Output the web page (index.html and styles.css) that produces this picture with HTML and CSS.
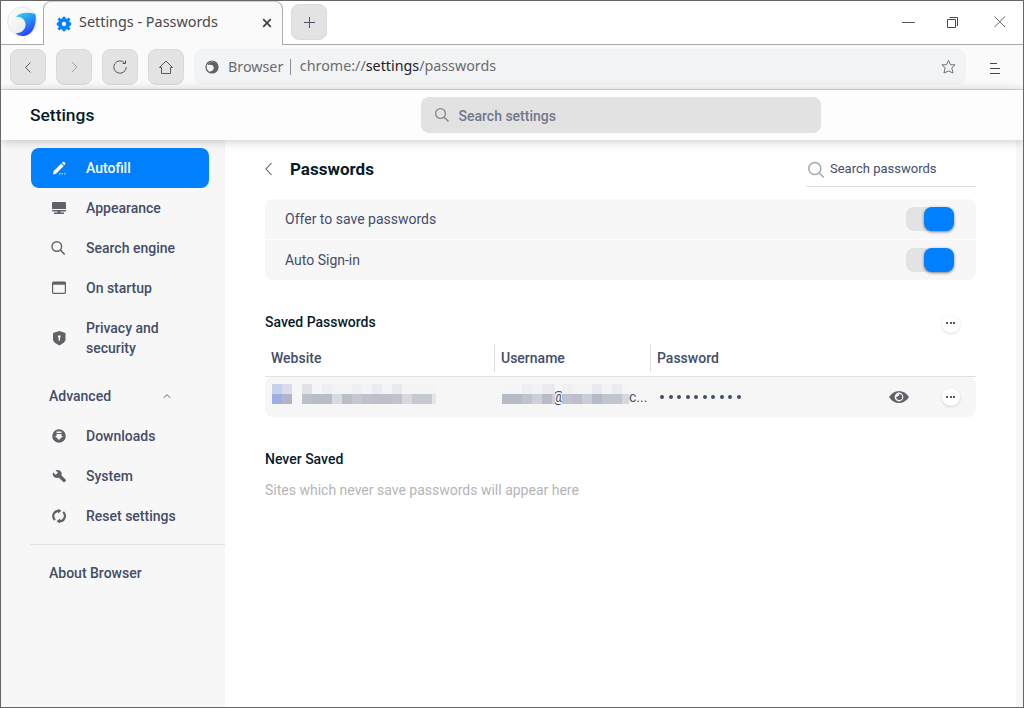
FILE: index.html
```html
<!DOCTYPE html>
<html lang="en">
<head>
<meta charset="utf-8">
<title>Settings - Passwords</title>
<link rel="stylesheet" href="styles.css">
</head>
<body>
<div class="window">
  <div class="tabstrip">
    <div class="logo-cell">
      <svg width="30" height="32" viewBox="0 0 30 32">
        <defs>
          <linearGradient id="lg" x1="0.2" y1="0" x2="0.7" y2="1"><stop offset="0" stop-color="#35d0ea"/><stop offset=".45" stop-color="#2590fb"/><stop offset="1" stop-color="#3030ff"/></linearGradient>
          <linearGradient id="lw" x1="0" y1="0" x2="1" y2="1"><stop offset="0" stop-color="#fff"/><stop offset="1" stop-color="#e6e6e9"/></linearGradient>
        </defs>
        <circle cx="15" cy="15.500" r="14.500" fill="url(#lw)" stroke="#e2e2e2" stroke-width=".8"/>
        <path d="M8.500 11C12 6.500 21 5.500 28.500 8C30 18 26 29 17 30C13.500 30.500 10.500 29 8.500 27.300C14.500 27.500 19 23 18.500 18C18 13.500 14 10 8.500 11Z" fill="url(#lg)"/>
      </svg>
    </div>
    <div class="tab">
      <svg class="gear" width="16" height="16" viewBox="0 0 16 16"><g fill="none" stroke="#0080ff"><circle cx="8" cy="8" r="4.100" stroke-width="3.900"/><path stroke-width="2.800" d="M8 .8V3M8 13V15.200M.8 8H3M13 8H15.200M2.500 2.500L4.500 4.500M11.500 11.500L13.500 13.500M2.500 13.500L4.500 11.500M11.500 4.500L13.500 2.500"/></g></svg>
      <span class="tab-title">Settings - Passwords</span>
      <svg width="10" height="10" viewBox="0 0 10 10"><path d="M1.200 1.200L8.800 8.800M8.800 1.200L1.200 8.800" stroke="#3c4043" stroke-width="1.700"/></svg>
    </div>
    <div class="strip-rest">
      <div class="tool-btn"><svg width="12" height="12" viewBox="0 0 12 12"><path d="M6.500 1V12M1 6.500H12" stroke="#4a5470"/></svg></div>
      <div class="win-controls">
        <svg width="14" height="14" viewBox="0 0 14 14"><path d="M1 7.500H14" stroke="#55585e"/></svg>
        <svg width="14" height="14" viewBox="0 0 14 14"><path d="M.5 4.500H8.500V12.500H.5ZM2.500 2.500H10.500V11" stroke="#44474e" fill="none"/></svg>
        <svg width="14" height="14" viewBox="0 0 14 14"><path d="M1.500 1.500L12 12M12 1.500L1.500 12" stroke="#5f6368"/></svg>
      </div>
    </div>
  </div>

  <div class="toolbar">
    <div class="tool-btn"><svg width="16" height="16" viewBox="0 0 16 16"><path d="M10.500 3.500L5.500 8.500L10.500 13.500" stroke="#55585e" fill="none"/></svg></div>
    <div class="tool-btn"><svg width="16" height="16" viewBox="0 0 16 16"><path d="M6 3L11 8L6 13" stroke="#a2a4a7" fill="none"/></svg></div>
    <div class="tool-btn"><svg width="16" height="16" viewBox="0 0 16 16"><path d="M12.700 4A6.200 6.200 0 1 0 14.200 8M10.500 4.500H13.500V1.500" stroke="#55585e" fill="none"/></svg></div>
    <div class="tool-btn"><svg width="16" height="16" viewBox="0 0 16 16"><path d="M1.500 8.500L8 2L14.500 8.500H12.500V14.500H3.500V8.500Z" stroke="#55585e" fill="none"/></svg></div>
    <div class="omnibox">
      <svg width="14" height="14" viewBox="0 0 14 14"><circle cx="7" cy="7" r="6" fill="none" stroke="#5f6368" stroke-width="1.200"/><path d="M3 4C4 .8 12 .5 13.200 6C13.500 10 10 13.500 6 13L5 11.500C8 11 9 9.500 8.700 7C8.200 4.800 5.500 4.300 3 5Z" fill="#5f6368"/></svg>
      <span class="scheme-name">Browser</span>
      <span class="url">chrome://<b>settings</b>/passwords</span>
      <svg width="16" height="16" viewBox="0 0 16 16"><path d="M8.500 1.500L10.500 5.800H15L11.800 9L13 14L8.500 12L4 14L5.200 9L2 5.800H6.500Z" stroke="#6c7075" fill="none" stroke-linejoin="round"/></svg>
    </div>
    <svg class="menu" width="12" height="14" viewBox="0 0 12 14"><path d="M1 2.500H8M1 7.500H11M1 12.500H11" stroke="#44474e"/></svg>
  </div>

  <div class="header">
    <h1>Settings</h1>
    <div class="search">
      <svg width="16" height="16" viewBox="0 0 16 16"><circle cx="6.500" cy="6.500" r="4.900" stroke="#858689" stroke-width="1.300" fill="none"/><path d="M10 10L14.500 14.500" stroke="#858689" stroke-width="1.400"/></svg>
      <span>Search settings</span>
    </div>
  </div>

  <div class="content">
    <nav class="sidebar">
      <div class="item active"><svg width="16" height="16" viewBox="0 0 16 16"><path fill="#fff" d="M2.500 11.300L10.200 3.600L12.700 6.100L5 13.800L2 14.500ZM11 2.800L11.900 1.900Q12.600 1.500 13.300 2.100L14.200 3Q14.700 3.600 14.200 4.200L13.400 5.200Z"/><path fill="#9fceff" d="M8 13h1.500v1.400h-1.500zM10.500 13h1.500v1.400h-1.500zM13 13h1.500v1.400h-1.500z"/></svg>Autofill</div>
      <div class="item"><svg width="16" height="16" viewBox="0 0 16 16"><path fill="#5f6368" d="M2 2H14Q15 2 15 3V9H1V3Q1 2 2 2ZM1 10H15V10.500Q15 11.500 14 11.500H2Q1 11.500 1 10.500ZM6.500 11H9.500V12.500H13V14H3V12.500H6.500Z"/></svg>Appearance</div>
      <div class="item"><svg width="16" height="16" viewBox="0 0 16 16"><circle cx="5.800" cy="6.500" r="4.800" stroke="#5f6368" stroke-width="1.400" fill="none"/><path d="M9.300 10L13.700 14.500" stroke="#5f6368" stroke-width="1.600"/></svg>Search engine</div>
      <div class="item"><svg width="16" height="16" viewBox="0 0 16 16"><rect x="1.600" y="2.100" width="12.800" height="11.300" rx="1" fill="none" stroke="#5f6368" stroke-width="1.200"/><path d="M1.500 2H14.500V4.700H1.500Z" fill="#5f6368"/></svg>On startup</div>
      <div class="item two-line"><svg width="16" height="16" viewBox="0 0 16 16"><path fill="#5f6368" fill-rule="evenodd" d="M8.300 1L14.500 3V10Q14 12.500 8.300 15.500Q2.500 12.500 2 10V3ZM8.300 5.200A1.400 1.400 0 0 0 7.600 7.800V10.800H9V7.800A1.400 1.400 0 0 0 8.300 5.200Z"/></svg><span>Privacy and security</span></div>
      <div class="item group">Advanced<svg width="10" height="10" viewBox="0 0 10 10"><path d="M1.800 6.800L5 3.600L8.200 6.800" stroke="#5f6368" fill="none"/></svg></div>
      <div class="item"><svg width="16" height="16" viewBox="0 0 16 16"><path fill="#5f6368" fill-rule="evenodd" d="M8 1.200A6.800 6.800 0 1 0 8 14.800A6.800 6.800 0 1 0 8 1.200ZM5.500 3.500H10.500V5H5.500ZM5.500 6H10.500V8H12L8 12L4 8H5.500Z"/></svg>Downloads</div>
      <div class="item"><svg width="16" height="16" viewBox="0 0 16 16"><path fill="#5f6368" d="M4.500 2.200Q8.500 1 10.500 4.300Q11 6 10.400 7.300L14.800 11.700Q15.300 12.300 14.700 13L13.700 14Q13 14.600 12.400 14L7.800 9.700Q5.200 10.800 2.900 8.800Q1 6.700 2 4.200L4.700 6.800L7 4.800Z"/></svg>System</div>
      <div class="item"><svg width="16" height="16" viewBox="0 0 16 16"><path d="M4 12A5.300 5.300 0 0 1 7.500 2.800M12.200 4A5.300 5.300 0 0 1 8.300 13.200" stroke="#5f6368" stroke-width="2.200" fill="none"/><path d="M7 .7L10.500 2.800L7 5.500ZM9 10.500L5.500 13.200L9 15.500Z" fill="#5f6368"/></svg>Reset settings</div>
      <div class="about">About Browser</div>
    </nav>

    <main class="main">
      <div class="title-row">
        <svg width="10" height="14" viewBox="0 0 10 14"><path d="M6.500 1L1 7L6.500 13" stroke="#5b6070" fill="none" stroke-width="1.100"/></svg>
        <h2>Passwords</h2>
        <div class="find">
          <svg width="18" height="18" viewBox="0 0 18 18"><circle cx="7.800" cy="7.500" r="6" stroke="#a2a7b3" stroke-width="1.500" fill="none"/><path d="M12.300 12L16.800 16.500" stroke="#a2a7b3" stroke-width="1.500"/></svg>
          <span>Search passwords</span>
        </div>
      </div>

      <div class="card">
        <div class="option"><span>Offer to save passwords</span><div class="toggle"><i></i></div></div>
        <div class="option"><span>Auto Sign-in</span><div class="toggle"><i></i></div></div>
      </div>

      <div class="section-head"><h3>Saved Passwords</h3><div class="more"><i></i><i></i><i></i></div></div>
      <div class="thead"><span>Website</span><span>Username</span><span>Password</span></div>
      <div class="entry">
        <div class="site"><div class="mosaic favicon"></div><div class="mosaic domain"></div></div>
        <div class="user"><div class="mosaic local"></div><div class="at"><span>@</span></div><div class="mosaic host"></div><span>c...</span></div>
        <div class="dots"><i></i><i></i><i></i><i></i><i></i><i></i><i></i><i></i><i></i><i></i></div>
        <svg class="eye" width="20" height="14" viewBox="0 0 20 14"><path fill="#5f6368" fill-rule="evenodd" d="M0 7Q4 1 10 1T20 7Q16 13 10 13T0 7ZM10 2.600A4.400 4.400 0 1 0 10 11.400A4.400 4.400 0 1 0 10 2.600Z"/><path fill="#5f6368" d="M10.200 4A3 3 0 1 1 7.200 7L8.800 6.300L10 5.500Z"/></svg>
        <div class="more"><i></i><i></i><i></i></div>
      </div>

      <h3 class="never">Never Saved</h3>
      <p class="empty">Sites which never save passwords will appear here</p>
    </main>
    <div class="scrollbar"></div>
  </div>
</div>
</body>
</html>
```
FILE: styles.css
```css
* { box-sizing: border-box; }
body { margin: 0; font: 500 14px/20px Roboto, sans-serif; color: #434d69; }
svg { display: block; flex: none; }
h1, h2, h3, p { margin: 0; }
.window { width: 1024px; height: 708px; border: 1px solid #666; background: #fff; display: flex; flex-direction: column; overflow: hidden; }

.tabstrip { height: 44px; display: flex; flex: none; }
.logo-cell { width: 42px; padding: 5px 0 0 6px; border-bottom: 1px solid #aaa; }
.tab { width: 240px; border: 1px solid #aaa; border-width: 0 1px; border-radius: 8px 8px 0 0; background: #fafafa; display: flex; align-items: center; padding: 0 10px 0 12px; box-shadow: inset 0 1px #ccc; }
.gear { position: relative; top: 1px; }
.tab-title { flex: 1; margin-left: 7px; padding-bottom: 2px; font: 400 14.400px/20px "Noto Sans", sans-serif; color: #46484c; }
.strip-rest { flex: 1; border-bottom: 1px solid #aaa; display: flex; justify-content: space-between; padding: 3px 16px 0 8px; }
.tool-btn { width: 36px; height: 36px; border-radius: 8px; background: #e3e3e3; border: 1px solid #dadada; display: flex; align-items: center; justify-content: center; flex: none; }
.win-controls { display: flex; gap: 32px; padding-top: 11px; }

.toolbar { height: 45px; flex: none; background: #fafafa; border-bottom: 1px solid #dadada; display: flex; padding: 4px 22px 0 9px; gap: 10px; }
.omnibox { width: 772px; height: 36px; border-radius: 9px; background: #f1f3f4; display: flex; align-items: center; padding: 0 10px 0 11px; font: 400 14.300px/20px "Noto Sans", sans-serif; color: #6a6d71; }
.scheme-name { margin-left: 9px; padding-right: 7px; line-height: 16px; border-right: 1px solid #8b8e92; }
.url { flex: 1; margin-left: 8.500px; padding-bottom: 2px; }
.url b { font-weight: 400; color: #202124; }
.menu { margin: 12px 0 0 13px; }

.header { height: 50px; flex: none; background: #fdfdfd; box-shadow: 0 1px 10px rgba(0,0,0,.22); position: relative; z-index: 1; display: flex; align-items: center; padding-left: 29px; }
h1 { width: 391px; font-size: 17.400px; font-weight: 500; color: #061b2b; }
.search { width: 400px; height: 36px; border-radius: 8px; background: #e2e2e2; display: flex; align-items: center; gap: 8.500px; padding-left: 13px; color: #71788c; }
.search span { padding-top: 2px; }

.content { flex: 1; display: flex; min-height: 0; }
.sidebar { width: 224px; background: #f7f7f7; padding-top: 8px; flex: none; }
.item { height: 40px; display: flex; align-items: center; gap: 19px; width: 178px; margin-left: 30px; padding-left: 20px; }
.active { background: #0080ff; color: #fff; border-radius: 8px; }
.two-line { height: 60px; align-items: center; }
.two-line span { width: 90px; }
.group { margin-top: 8px; padding: 0 37px 0 18px; justify-content: space-between; }
.about { border-top: 1px solid #e0e0e0; margin: 8px 0 0 29px; padding: 18px 0 0 19px; }

.main { width: 751px; margin-right: 40px; padding: 0 0 0 40px; }
.title-row { display: flex; align-items: center; height: 59px; }
.title-row > svg { margin-top: -1px; }
h2 { margin-left: 15px; padding-bottom: 2px; flex: 1; font-size: 17px; font-weight: 700; color: #061b2b; }
.find { width: 170px; height: 36px; border-bottom: 1px solid #e0e0e0; display: flex; align-items: center; gap: 5px; padding-left: 1px; margin-top: -1px; font-size: 13px; font-weight: 400; }
.find svg { margin-top: 3px; }
.card { border-radius: 8px; overflow: hidden; display: grid; gap: 1px; }
.option { height: 40px; background: #f7f7f7; display: flex; align-items: center; justify-content: space-between; padding: 0 20px; font-weight: 400; }
.toggle { width: 50px; height: 24px; border-radius: 8px; background: linear-gradient(90deg, #e3e3e3 40px, transparent 40px); display: flex; justify-content: flex-end; }
.toggle i { width: 30px; height: 24px; border-radius: 8px; background: #0080ff; box-shadow: 0 1px 3px rgba(0,0,0,.5); margin-right: 2px; }
.section-head { margin-top: 32px; height: 20px; display: flex; justify-content: space-between; padding-right: 16.500px; }
h3 { font-size: 14px; font-weight: 500; color: #061b2b; }
.more { width: 18px; height: 18px; border-radius: 50%; background: #fff; box-shadow: 0 1px 3px rgba(0,0,0,.14); display: flex; align-items: flex-start; justify-content: center; gap: 1.500px; padding-top: 7px; flex: none; }
.more i { width: 2px; height: 2px; background: #4a5580; }
.section-head .more { margin-top: 3px; }
.entry .more { padding-top: 8px; }
.thead { height: 45px; padding-bottom: 4px; border-bottom: 1px solid #e0e0e0; display: flex; line-height: 28px; padding-top: 12px; }
.thead span { height: 28px; padding-left: 6px; }
.thead span + span { border-left: 1px solid #e0e0e0; }
.thead span:nth-child(1) { width: 229px; }
.thead span:nth-child(2) { width: 156px; }
.entry { height: 40px; background: #f6f6f6; border-radius: 8px; display: flex; align-items: center; padding-right: 16.500px; }
.site { width: 237px; height: 40px; padding: 7px 0 0 7px; display: flex; gap: 10px; }
.mosaic { height: 20px; flex: none; position: relative; background-repeat: no-repeat; background-size: 100% 10px; background-position: 0 0, 0 10px; }
.favicon { width: 20px; background-image: linear-gradient(90deg, #c6d1ee 10px, #d8dcec 10px), linear-gradient(90deg, #9faee5 10px, #b2b4c7 10px); }
.domain { width: 134px; background-image:
  linear-gradient(90deg, #e0e2e5 10px, #f5f5f5 10px 20px, #eeeff1 20px 30px, #f3f3f4 30px 50px, #eeeff1 50px 60px, #f2f3f4 60px 70px, #ebecf1 70px 80px, #f3f3f3 80px 90px, #e9eaef 90px 100px, #f4f4f5 100px),
  linear-gradient(90deg, #bdc1ca 10px, #b9bdc6 10px 30px, #d9dae0 30px 40px, #b9bec7 40px 50px, #c5c8d2 50px 60px, #bec2cb 60px 70px, #bdc0ca 70px 90px, #c1c3cd 90px 100px, #d8d8dd 100px 110px, #c6c9d1 110px 130px, #e4e5e9 130px); }
.user { width: 158px; height: 40px; padding-top: 7px; display: flex; font-weight: 400; line-height: 27px; }
.local { width: 53px; background-image:
  linear-gradient(90deg, #f5f5f5 20px, #eeeff0 20px 30px, #f2f2f4 30px 40px, #ececf0 40px 50px, #e8e9ec 50px),
  linear-gradient(90deg, #b7bbc6 20px, #bfc3cc 20px 30px, #cdd0d7 30px 40px, #b9bcc7 40px 50px, #cbced5 50px); }
.at { width: 7px; display: flex; justify-content: center; }
.host { width: 67px; background-image:
  linear-gradient(90deg, #f0f0f2 10px, #f3f3f4 10px 30px, #e9eaf0 30px 40px, #f2f3f4 40px 50px, #ececee 50px 60px, #f4f4f4 60px),
  linear-gradient(90deg, #c0c3ce 10px, #bdc0cc 10px 20px, #cacdd5 20px 30px, #b5bac9 30px 40px, #c1c4cf 40px 50px, #c1c5cc 50px 60px, #d6d8dc 60px); }
.dots { display: flex; gap: 4.500px; flex: 1; }
.dots i { width: 4px; height: 4px; border-radius: 50%; background: #434d69; }
.eye { margin-right: 32.500px; }
.never { margin-top: 32px; }
.empty { margin-top: 11px; font-weight: 400; color: #b5b5b5; }
.scrollbar { width: 7px; background: #f6f6f6; }
```
